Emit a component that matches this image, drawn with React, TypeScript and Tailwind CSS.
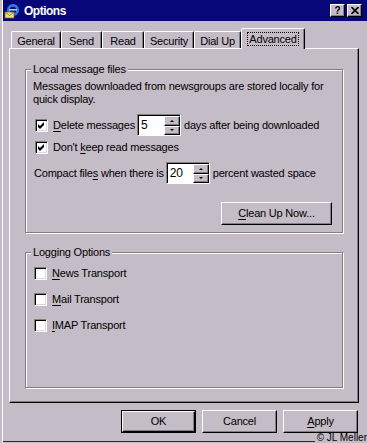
import { ReactNode } from "react";

const Check = () => (
        <svg width="7" height="7" viewBox="0 0 7 7" className="block">
                <polygon points="0,2 2,4 6,0 6,3 2,7 0,5" fill="#000" />
        </svg>
);

const CheckBox = ({ checked }: { checked?: boolean }) => (
        <span className="w-[13px] h-[13px] shrink-0 bg-white border border-t-[#808080] border-l-[#808080] border-r-white border-b-white shadow-[inset_1px_1px_0_#000,inset_-1px_-1px_0_#dcd6de] flex items-center justify-center">
                {checked && <Check />}
        </span>
);

const SpinButton = ({ up }: { up?: boolean }) => (
        <div className="h-[10px] w-[16px] bg-[#c4bcc6] border border-t-white border-l-white border-r-black border-b-black shadow-[inset_-1px_-1px_0_#808080] flex items-center justify-center">
                {up
                        ? <div className="w-0 h-0 border-x-[2px] border-x-transparent border-b-[2px] border-b-black" />
                        : <div className="w-0 h-0 border-x-[2px] border-x-transparent border-t-[2px] border-t-black" />}
        </div>
);

const Spin = ({ value }: { value: string }) => (
        <div className="w-[44px] h-[22px] shrink-0 flex bg-white border border-t-[#808080] border-l-[#808080] border-r-white border-b-white shadow-[inset_1px_1px_0_#000]">
                <span className="flex-1 pl-[3px] pt-[3px] text-[12px] leading-[14px]">{value}</span>
                <div className="flex flex-col w-[16px] mt-px">
                        <SpinButton up />
                        <SpinButton />
                </div>
        </div>
);

const Button = ({ children, def, className = "" }: { children: ReactNode, def?: boolean, className?: string }) => (
        <div className={`${ def ? "border border-black" : "" } ${ className }`}>
                <div className="h-full w-full flex items-center justify-center bg-[#c4bcc6] border border-t-white border-l-white border-r-black border-b-black shadow-[inset_-1px_-1px_0_#808080]">
                        {children}
                </div>
        </div>
);

const GroupBox = ({ title, children, className = "" }: { title: string, children: ReactNode, className?: string }) => (
        <div className={`border border-[#808080] shadow-[1px_1px_0_#fff,inset_1px_1px_0_#fff] pl-[7px] pr-[10px] flex flex-col ${ className }`}>
                <div className="-mt-[7px] -ml-[2px] px-[2px] w-fit bg-[#c4bcc6] leading-[13px]">{title}</div>
                {children}
        </div>
);

const U = ({ children }: { children: ReactNode }) => <span className="underline underline-offset-[2px]">{children}</span>;

const tabs = [
        { label: "General", w: "w-[50px]" },
        { label: "Send", w: "w-[41px]" },
        { label: "Read", w: "w-[42px]" },
        { label: "Security", w: "w-[50px]" },
        { label: "Dial Up", w: "w-[47px]" },
];

const App = () => {
        return <div className="relative w-[367px] h-[443px] bg-[#c4bcc6] overflow-hidden flex flex-col font-['Liberation_Sans',Arial,sans-serif] text-[11px] tracking-[-0.2px] text-black">
                <div className="ml-[2px] border-l border-l-white flex-1 flex flex-col">
                        {/* title bar */}
                        <div className="h-[21px] bg-[#07077a] flex items-center">
                                <svg width="16" height="16" viewBox="0 0 16 16" className="ml-[1px]">
                                        <circle cx="9" cy="7" r="6" fill="#2d7be0" />
                                        <circle cx="9" cy="7" r="3.2" fill="#07077a" />
                                        <rect x="5" y="6" width="8" height="1.6" fill="#9fd0ff" />
                                        <rect x="1" y="9" width="9" height="6" fill="#f4e27a" stroke="#7a6a20" strokeWidth="0.8" />
                                        <path d="M1.5 9.5 L5.5 12.5 L9.5 9.5" fill="none" stroke="#7a6a20" strokeWidth="0.8" />
                                </svg>
                                <span className="ml-[4px] text-white font-bold text-[12px] tracking-[-0.5px]">Options</span>
                                <div className="ml-auto mr-[5px] flex gap-[2px]">
                                        <Button className="w-[15px] h-[13px]"><span className="font-bold text-[10px] leading-none">?</span></Button>
                                        <Button className="w-[15px] h-[13px]">
                                                <svg width="8" height="7" viewBox="0 0 8 7"><path d="M0.5 0 L7.5 7 M7.5 0 L0.5 7" stroke="#000" strokeWidth="1.6" /></svg>
                                        </Button>
                                </div>
                        </div>

                        {/* tabs */}
                        <div className="h-[27px] pl-[8px] flex items-end">
                                {tabs.map (t =>
                                        <div key={ t.label } className={`${ t.w } h-[17px] pt-[2px] flex items-center justify-center border-t border-l border-white border-r border-r-black shadow-[inset_-1px_0_0_#808080] rounded-t-[2px]`}>
                                                {t.label}
                                        </div>
                                )}
                                <div className="w-[64px] h-[21px] -mb-px relative z-10 bg-[#c4bcc6] pt-[3px] flex justify-center items-start border-t border-l border-white border-r border-r-black shadow-[inset_-1px_0_0_#808080] rounded-t-[2px]">
                                        <span className="border border-dotted border-black px-[1px] leading-[12px]">Advanced</span>
                                </div>
                        </div>

                        {/* panel */}
                        <div className="ml-[6px] w-[350px] h-[355px] border-t border-l border-white border-r border-b border-r-black border-b-black shadow-[inset_-1px_-1px_0_#808080] px-[15px] pt-[20px] flex flex-col">
                                <GroupBox title="Local message files" className="pb-[7px]">
                                        <p className="mt-[4px] leading-[13px]">
                                                Messages downloaded from newsgroups are stored locally for<br />quick display.
                                        </p>
                                        <div className="mt-[8px] h-[22px] flex items-center">
                                                <span className="ml-[2px]"><CheckBox checked /></span>
                                                <span className="ml-[5px]"><U>D</U>elete messages</span>
                                                <span className="ml-[2px]"><Spin value="5" /></span>
                                                <span className="ml-[3px]">days after being downloaded</span>
                                        </div>
                                        <div className="mt-[5px] h-[13px] flex items-center">
                                                <span className="ml-[2px]"><CheckBox checked /></span>
                                                <span className="ml-[5px]">Don't <U>k</U>eep read messages</span>
                                        </div>
                                        <div className="mt-[8px] h-[22px] flex items-center">
                                                <span className="ml-[1px]">Compact file<U>s</U> when there is</span>
                                                <span className="ml-[2px]"><Spin value="20" /></span>
                                                <span className="ml-[3px]">percent wasted space</span>
                                        </div>
                                        <div className="mt-[18px] flex justify-end">
                                                <Button className="w-[111px] h-[23px]"><span><U>C</U>lean Up Now...</span></Button>
                                        </div>
                                </GroupBox>

                                <GroupBox title="Logging Options" className="mt-[19px] h-[136px]">
                                        <div className="mt-[8px] flex flex-col gap-[13px]">
                                                {[["N", "ews Transport"], ["M", "ail Transport"], ["I", "MAP Transport"]].map (([k, rest]) =>
                                                        <div key={ k } className="h-[13px] flex items-center">
                                                                <span className="ml-[1px]"><CheckBox /></span>
                                                                <span className="ml-[5px]"><U>{k}</U>{rest}</span>
                                                        </div>
                                                )}
                                        </div>
                                </GroupBox>
                        </div>

                        {/* dialog buttons */}
                        <div className="mt-[7px] pr-[9px] flex justify-end gap-[6px]">
                                <Button def className="w-[75px] h-[23px]">OK</Button>
                                <Button className="w-[75px] h-[23px]">Cancel</Button>
                                <Button className="w-[75px] h-[23px]"><span><U>A</U>pply</span></Button>
                        </div>

                        <div className="mt-auto mb-[1px] h-px bg-[#2e2a30]" />
                </div>

                <span className="absolute right-0 bottom-0 bg-[#c4bcc6] pl-[2px] text-[10px] leading-[10px] tracking-normal">© JL Meller</span>
        </div>
}

export default App;
